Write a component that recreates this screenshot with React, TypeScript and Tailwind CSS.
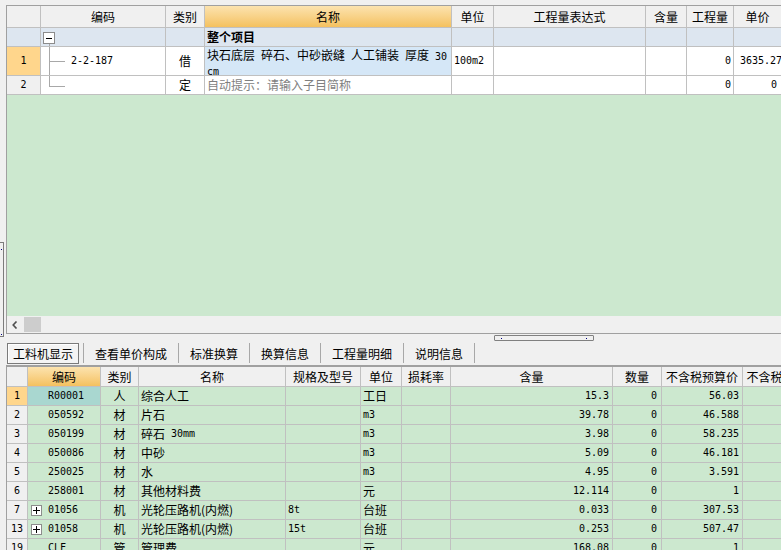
import React from "react";

const MONO = "font-['DejaVu_Sans_Mono',monospace] text-[10px]";
const TOP_COLS = "grid grid-cols-[34px_125px_39px_247px_42px_152px_41px_47px_48px]";
const BOT_COLS = "grid grid-cols-[21px_73px_38px_147px_75px_41px_49px_162px_49px_81px_80px]";

function C({ className = "", children }: { className?: string; children?: React.ReactNode }) {
  return (
    <div className={"border-r border-b border-[#c0c0c0] flex items-center overflow-hidden whitespace-nowrap " + className}>
      {children}
    </div>
  );
}

const Hd = ({ children, orange }: { children?: React.ReactNode; orange?: boolean }) => (
  <C className={"justify-center " + (orange ? "bg-linear-to-b from-[#fce3ae] to-[#f4c15e]" : "bg-[#f0f0f0]")}>{children}</C>
);

const Mono = ({ children }: { children: React.ReactNode }) => <span className={MONO}>{children}</span>;
const Sp = () => <span className="inline-block w-[6px]" />;

function TopGrid() {
  return (
    <div className="flex flex-col shrink-0">
      <div className={TOP_COLS + " h-[22px]"}>
        <Hd />
        <Hd>编码</Hd>
        <Hd>类别</Hd>
        <Hd orange>名称</Hd>
        <Hd>单位</Hd>
        <Hd>工程量表达式</Hd>
        <Hd>含量</Hd>
        <Hd>工程量</Hd>
        <Hd>单价</Hd>
      </div>

      {/* 整个项目 */}
      <div className={TOP_COLS + " h-[19px] bg-[#dde6f0]"}>
        <C />
        <C className="relative">
          <span className="absolute left-[2px] top-[4px] w-[12px] h-[12px] border border-[#8c8c8c] bg-white flex items-center justify-center">
            <span className="w-[6px] h-px bg-black" />
          </span>
          <span className="absolute left-[8px] top-[16px] bottom-0 w-px bg-[#a8a8a8]" />
        </C>
        <C />
        <C className="pl-[2px] font-bold">整个项目</C>
        <C />
        <C />
        <C />
        <C />
        <C />
      </div>

      {/* row 1 */}
      <div className={TOP_COLS + " h-[29px] bg-white"}>
        <C className="justify-center bg-[#ffd68c]"><Mono>1</Mono></C>
        <C className="relative pl-[30px]">
          <span className="absolute left-[8px] top-0 bottom-0 w-px bg-[#a8a8a8]" />
          <span className="absolute left-[8px] top-[14px] w-[16px] h-px bg-[#a8a8a8]" />
          <Mono>2-2-187</Mono>
        </C>
        <C className="justify-center">借</C>
        <C className="bg-[#d5e7f7] pl-[2px] !items-start">
          <div className="leading-[13px] pt-[1px]">
            <div>
              块石底层<Sp />碎石、中砂嵌缝<Sp />人工铺装<Sp />厚度<Sp /><Mono>30</Mono>
            </div>
            <div><Mono>cm</Mono></div>
          </div>
        </C>
        <C className="pl-[2px]"><Mono>100m2</Mono></C>
        <C />
        <C />
        <C className="justify-end pr-[2px]"><Mono>0</Mono></C>
        <C className="pl-[6px]"><Mono>3635.27</Mono></C>
      </div>

      {/* row 2 */}
      <div className={TOP_COLS + " h-[19px] bg-white"}>
        <C className="justify-center bg-[#f0f0f0]"><Mono>2</Mono></C>
        <C className="relative">
          <span className="absolute left-[8px] top-0 h-[10px] w-px bg-[#a8a8a8]" />
          <span className="absolute left-[8px] top-[10px] w-[16px] h-px bg-[#a8a8a8]" />
        </C>
        <C className="justify-center">定</C>
        <C className="pl-[2px] text-[#7f7f7f]">自动提示：请输入子目简称</C>
        <C />
        <C />
        <C />
        <C className="justify-end pr-[2px]"><Mono>0</Mono></C>
        <C className="justify-end pr-[4px]"><Mono>0</Mono></C>
      </div>
    </div>
  );
}

type Row = {
  no: string;
  code: string;
  plus?: boolean;
  kind: string;
  name: React.ReactNode;
  spec?: string;
  unit: React.ReactNode;
  qty: string;
  price: string;
};

const ROWS: Row[] = [
  { no: "1", code: "R00001", kind: "人", name: "综合人工", unit: "工日", qty: "15.3", price: "56.03" },
  { no: "2", code: "050592", kind: "材", name: "片石", unit: <Mono>m3</Mono>, qty: "39.78", price: "46.588" },
  { no: "3", code: "050199", kind: "材", name: <>碎石<Sp /><Mono>30mm</Mono></>, unit: <Mono>m3</Mono>, qty: "3.98", price: "58.235" },
  { no: "4", code: "050086", kind: "材", name: "中砂", unit: <Mono>m3</Mono>, qty: "5.09", price: "46.181" },
  { no: "5", code: "250025", kind: "材", name: "水", unit: <Mono>m3</Mono>, qty: "4.95", price: "3.591" },
  { no: "6", code: "258001", kind: "材", name: "其他材料费", unit: "元", qty: "12.114", price: "1" },
  { no: "7", code: "01056", plus: true, kind: "机", name: "光轮压路机(内燃)", spec: "8t", unit: "台班", qty: "0.033", price: "307.53" },
  { no: "13", code: "01058", plus: true, kind: "机", name: "光轮压路机(内燃)", spec: "15t", unit: "台班", qty: "0.253", price: "507.47" },
  { no: "19", code: "CLF", kind: "管", name: "管理费", unit: "元", qty: "168.08", price: "1" },
];

function BottomGrid() {
  return (
    <div className="border-t border-l border-[#a0a0a0] flex flex-col shrink-0">
      <div className={BOT_COLS + " h-[20px]"}>
        <Hd />
        <Hd orange>编码</Hd>
        <Hd>类别</Hd>
        <Hd>名称</Hd>
        <Hd>规格及型号</Hd>
        <Hd>单位</Hd>
        <Hd>损耗率</Hd>
        <Hd>含量</Hd>
        <Hd>数量</Hd>
        <Hd>不含税预算价</Hd>
        <Hd>不含税市场价</Hd>
      </div>
      {ROWS.map((r, i) => (
        <div key={r.no} className={BOT_COLS + " h-[19px] bg-[#cce8cf]"}>
          <C className={"justify-center " + (i === 0 ? "bg-[#ffd68c]" : "bg-[#f0f0f0]")}><Mono>{r.no}</Mono></C>
          <C className={"relative pl-[20px] " + (i === 0 ? "bg-[#a9d7d0]" : "")}>
            {r.plus && (
              <span className="absolute left-[3px] top-[4px] w-[11px] h-[11px] border border-[#8c8c8c] bg-white flex items-center justify-center">
                <span className="absolute w-[7px] h-px bg-black" />
                <span className="absolute w-px h-[7px] bg-black" />
              </span>
            )}
            <Mono>{r.code}</Mono>
          </C>
          <C className="justify-center">{r.kind}</C>
          <C className="pl-[2px]">{r.name}</C>
          <C className="pl-[2px]">{r.spec && <Mono>{r.spec}</Mono>}</C>
          <C className="pl-[2px]">{r.unit}</C>
          <C />
          <C className="justify-end pr-[3px]"><Mono>{r.qty}</Mono></C>
          <C className="justify-end pr-[4px]"><Mono>0</Mono></C>
          <C className="justify-end pr-[3px]"><Mono>{r.price}</Mono></C>
          <C />
        </div>
      ))}
    </div>
  );
}

const TABS = ["查看单价构成", "标准换算", "换算信息", "工程量明细", "说明信息"];

export default function App() {
  return (
    <div className="w-[781px] h-[550px] overflow-hidden bg-[#f0f0f0] flex text-[12px] text-black font-['Noto_Sans_CJK_SC',sans-serif] leading-none">
      {/* left edge of neighbouring pane */}
      <div className="w-[6px] shrink-0 pt-[242px]">
        <div className="w-[4px] h-[95px] border-y border-r border-[#7c7c7c] relative">
          <span className="absolute left-[1px] top-[6px] w-px h-px bg-[#000080]" />
          <span className="absolute left-[1px] bottom-[1px] w-px h-px bg-[#000080]" />
        </div>
      </div>

      <div className="w-[775px] shrink-0 flex flex-col pt-[5px]">
        {/* top panel */}
        <div className="h-[329px] shrink-0 border-y border-l border-[#a0a0a0] flex flex-col">
          <TopGrid />
          <div className="flex-1 bg-[#cce8cf]" />
          <div className="h-[17px] shrink-0 bg-[#f0f0f0] flex items-center">
            <svg width="6" height="8" viewBox="0 0 6 8" className="ml-[5px]">
              <path d="M4.5 0.5 L1.2 4 L4.5 7.5" fill="none" stroke="#505050" strokeWidth="1.6" />
            </svg>
            <div className="ml-[6px] w-[17px] h-[15px] bg-[#cdcdcd]" />
          </div>
        </div>

        {/* splitter */}
        <div className="h-[8px] shrink-0 flex items-center">
          <div className="ml-[488px] w-[100px] h-[6px] border border-[#808080] rounded-[1px] flex items-center justify-between px-[6px]">
            <span className="w-px h-px bg-[#000080]" />
            <span className="w-px h-px bg-[#000080]" />
          </div>
        </div>

        {/* tabs */}
        <div className="h-[24px] shrink-0 border-b border-[#a0a0a0] flex items-start pl-px pt-px">
          <div className="w-[72px] h-[21px] border border-[#7a7a7a] shadow-[inset_1px_1px_0_#ffffff] bg-[#f4f4f4] flex items-center justify-center">
            工料机显示
          </div>
          <div className="ml-[4px] w-px h-[20px] bg-[#a8a8a8]" />
          {TABS.map((t) => (
            <React.Fragment key={t}>
              <div className="h-[21px] px-[11px] flex items-center">{t}</div>
              <div className="w-px h-[20px] bg-[#a8a8a8]" />
            </React.Fragment>
          ))}
        </div>

        <BottomGrid />
      </div>
    </div>
  );
}
